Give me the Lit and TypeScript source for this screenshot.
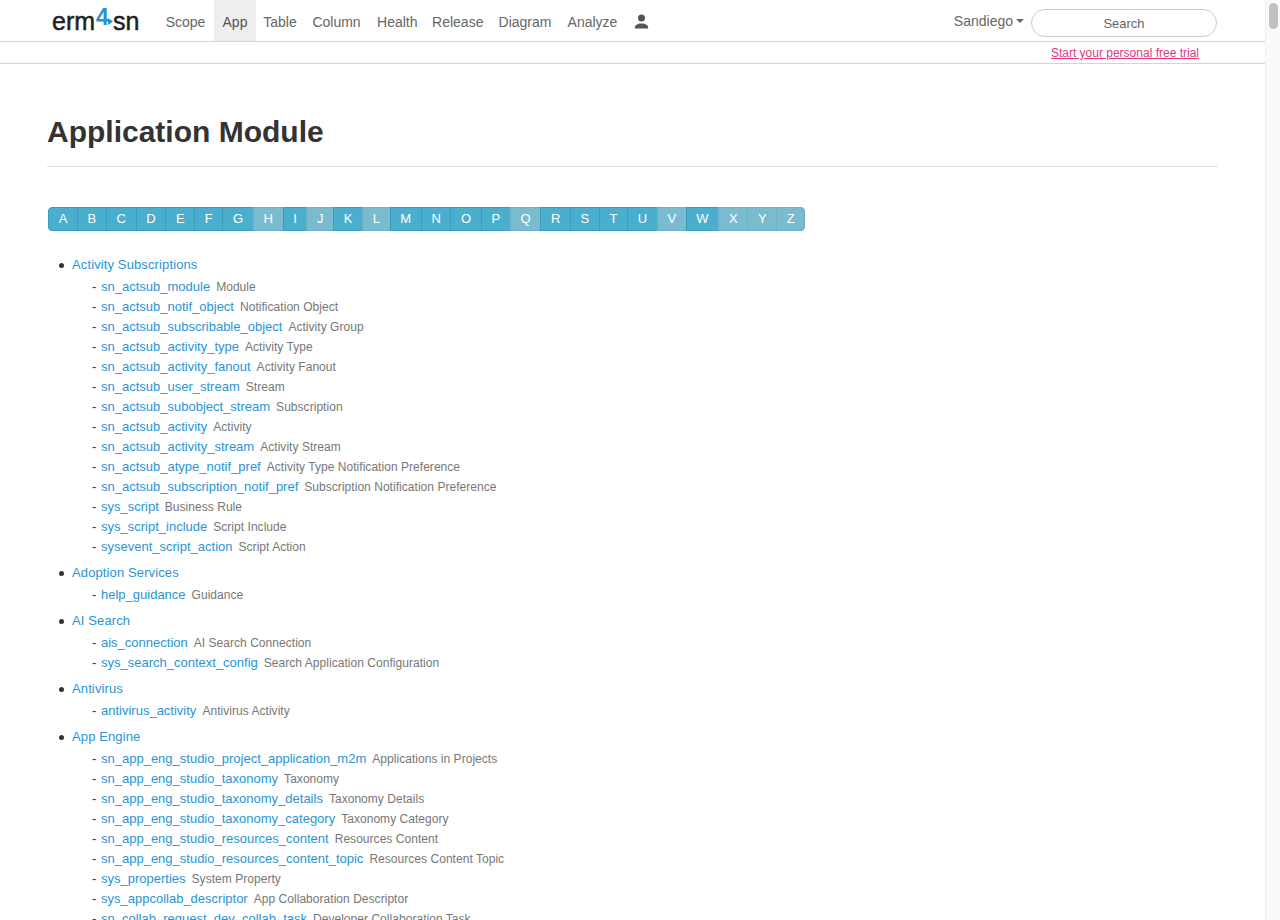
import { LitElement, html, css } from "lit";
import { customElement } from "lit/decorators.js";

const LETTERS: [string, boolean][] = "ABCDEFGHIJKLMNOPQRSTUVWXYZ".split("").map((l) => [l, "HJLQVXYZ".includes(l)]);
const MODULES: [string, [string, string][]][] = [
  ["Activity Subscriptions", [
    ["sn_actsub_module", "Module"],
    ["sn_actsub_notif_object", "Notification Object"],
    ["sn_actsub_subscribable_object", "Activity Group"],
    ["sn_actsub_activity_type", "Activity Type"],
    ["sn_actsub_activity_fanout", "Activity Fanout"],
    ["sn_actsub_user_stream", "Stream"],
    ["sn_actsub_subobject_stream", "Subscription"],
    ["sn_actsub_activity", "Activity"],
    ["sn_actsub_activity_stream", "Activity Stream"],
    ["sn_actsub_atype_notif_pref", "Activity Type Notification Preference"],
    ["sn_actsub_subscription_notif_pref", "Subscription Notification Preference"],
    ["sys_script", "Business Rule"],
    ["sys_script_include", "Script Include"],
    ["sysevent_script_action", "Script Action"],
  ]],
  ["Adoption Services", [["help_guidance", "Guidance"]]],
  ["AI Search", [
    ["ais_connection", "AI Search Connection"],
    ["sys_search_context_config", "Search Application Configuration"],
  ]],
  ["Antivirus", [["antivirus_activity", "Antivirus Activity"]]],
  ["App Engine", [
    ["sn_app_eng_studio_project_application_m2m", "Applications in Projects"],
    ["sn_app_eng_studio_taxonomy", "Taxonomy"],
    ["sn_app_eng_studio_taxonomy_details", "Taxonomy Details"],
    ["sn_app_eng_studio_taxonomy_category", "Taxonomy Category"],
    ["sn_app_eng_studio_resources_content", "Resources Content"],
    ["sn_app_eng_studio_resources_content_topic", "Resources Content Topic"],
    ["sys_properties", "System Property"],
    ["sys_appcollab_descriptor", "App Collaboration Descriptor"],
    ["sn_collab_request_dev_collab_task", "Developer Collaboration Task"],
  ]],
];
const NAV: [string, number][] = [["Scope", 57], ["App", 42], ["Table", 48], ["Column", 65], ["Health", 56.5], ["Release", 64.5], ["Diagram", 70], ["Analyze", 65]];

@customElement("app-root")
export class AppRoot extends LitElement {
  static styles = css`
    :host { display: flex; height: 920px; overflow: hidden; font-family: "Liberation Sans", Arial, sans-serif; color: #333; background: #fff; }
    a { color: #2a94d6; text-decoration: none; }
    .page { width: 1265px; flex: none; }
    .top { height: 41px; border-bottom: 1px solid #d4d4d4; display: flex; align-items: stretch; }
    .logo { width: 105px; margin-left: 52px; display: flex; align-items: flex-start; font-size: 25px; color: #222; padding-top: 7px; -webkit-text-stroke: 0.5px #222; box-sizing: border-box; line-height: 28px; }
    .logo .four { display: flex; align-items: flex-end; color: #2b8fd0; font-size: 23px; font-weight: 700; -webkit-text-stroke: 0; margin: -4px 0 0 1px; width: 17px; }
    .logo svg { display: block; margin: 0 0 6px -1px; flex: none; }
    .nav { display: flex; }
    .nav a { color: #666; font-size: 14px; text-align: center; line-height: 44px; height: 41px; white-space: nowrap; }
    .nav a.on { background: #eee; color: #555; }
    .user { display: flex; align-items: center; padding: 0 8px 0 9px; }
    .user svg { display: block; margin-top: 2px; }
    .right { margin-left: auto; display: flex; align-items: center; padding-right: 48px; }
    .drop { color: #666; font-size: 14px; display: flex; align-items: center; gap: 3px; margin-right: 7px; }
    .caret { width: 0; height: 0; border-left: 4px solid transparent; border-right: 4px solid transparent; border-top: 4px solid #666; }
    .search { width: 186px; height: 28px; box-sizing: border-box; border: 1px solid #ccc; border-radius: 14px; text-align: center; font-size: 13px; line-height: 28px; color: #666; margin-top: 5px; }
    .trial { height: 21px; border-bottom: 1px solid #d4d4d4; text-align: right; padding-right: 66px; font-size: 12px; line-height: 22px; }
    .trial a { color: #e0397f; text-decoration: underline; }
    .main { padding: 0 47px; }
    h1 { margin: 49px 0 0; font-size: 30px; font-weight: 700; line-height: 38px; color: #333; padding-bottom: 15px; border-bottom: 1px solid #ddd; }
    .letters { display: inline-flex; margin: 40px 0 0 1px; }
    .letters a { color: #fff; background: #4aaecf; border: 1px solid #3a9dbd; font-size: 13px; line-height: 22px; height: 24px; padding: 0 9.65px; box-sizing: border-box; margin-left: -1px; }
    .letters a:first-child { margin-left: 0; border-radius: 4px 0 0 4px; }
    .letters a:last-child { border-radius: 0 4px 4px 0; }
    .letters a.off { background: #7bbbd0; border-color: #6db0c6; }
    ul.mods { list-style: none; margin: 24px 0 0; padding: 0 0 0 25px; }
    .mod { position: relative; margin-bottom: 6px; }
    .mod::before { content: ""; position: absolute; left: -13px; top: 8px; width: 5px; height: 5px; border-radius: 50%; background: #333; }
    .mod > a { font-size: 13px; letter-spacing: 0.12px; line-height: 20px; display: block; }
    .rows { margin-top: 2px; }
    .row { display: flex; align-items: baseline; height: 20px; line-height: 20px; margin-left: 20px; font-size: 13px; }
    .row .dash { width: 9px; color: #333; }
    .row .d { font-size: 12px; letter-spacing: 0.04px; color: #777; margin-left: 6px; }
    .bar { flex: 1; background: #fafafa; border-left: 1px solid #eee; position: relative; }
    .thumb { position: absolute; left: 3px; top: 3px; width: 9px; height: 26px; background: #c1c1c1; border-radius: 5px; }
  `;

  render() {
    return html`
      <div class="page">
        <div class="top">
          <a class="logo"><span>erm</span><span class="four">4<svg width="5" height="7" viewBox="0 0 5 7"><path d="M0 0l5 3.5L0 7z" fill="#2b8fd0"/></svg></span><span>sn</span></a>
          <div class="nav">
            ${NAV.map(([n, w]) => html`<a class=${n === "App" ? "on" : ""} style="width:${w}px">${n}</a>`)}
            <span class="user"><svg width="15" height="15" viewBox="0 0 15 15"><circle cx="7.5" cy="4" r="3.5" fill="#555"/><path d="M0.8 14.5c0-1.6.2-3 1.4-3.6 1.2-.6 2.6-1 3.4-1.4h3.8c.8.4 2.2.8 3.4 1.4 1.2.6 1.4 2 1.4 3.6z" fill="#555"/></svg></span>
          </div>
          <div class="right">
            <span class="drop">Sandiego<span class="caret"></span></span>
            <div class="search">Search</div>
          </div>
        </div>
        <div class="trial"><a>Start your personal free trial</a></div>
        <div class="main">
          <h1>Application Module</h1>
          <div class="letters">${LETTERS.map(([l, off]) => html`<a class=${off ? "off" : ""}>${l}</a>`)}</div>
          <ul class="mods">
            ${MODULES.map(([name, rows]) => html`<li class="mod"><a>${name}</a>
              <div class="rows">${rows.map(([t, d]) => html`<div class="row"><span class="dash">-</span><a>${t}</a><span class="d">${d}</span></div>`)}</div></li>`)}
          </ul>
        </div>
      </div>
      <div class="bar"><div class="thumb"></div></div>
    `;
  }
}
